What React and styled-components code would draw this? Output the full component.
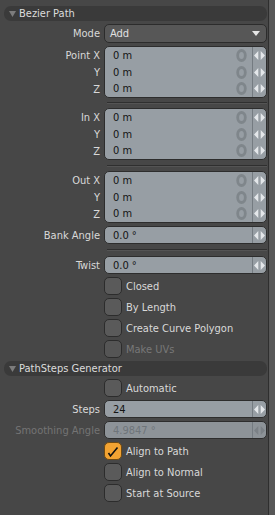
import React from 'react';
import styled, { createGlobalStyle } from 'styled-components';

const Global = createGlobalStyle`
  html, body { margin: 0; padding: 0; background: #474747; }
  body {
    font-family: "DejaVu Sans Condensed", "DejaVu Sans", sans-serif;
    font-stretch: condensed;
    font-size: 11px;
  }
`;

const Spinner = ({ dim }) => (
  <SpinCell>
    <svg width="11" height="11" viewBox="0 0 11 11">
      <path d="M0 5.5 L4.3 1 L4.3 10 Z M6.7 1 L11 5.5 L6.7 10 Z" fill={dim ? '#7b8186' : '#e4e7ea'} />
    </svg>
  </SpinCell>
);

const ZeroIcon = () => (
  <ZeroCell>
    <svg width="11" height="13" viewBox="0 0 11 13">
      <ellipse cx="5.5" cy="6.5" rx="3.8" ry="5" fill="none" stroke="#7f868b" strokeWidth="2.8" />
    </svg>
  </ZeroCell>
);

const VectorGroup = ({ labels }) => (
  <Line>
    <LabelStack>
      {labels.map((l, i) => (
        <StackLabel key={i}>{l}</StackLabel>
      ))}
    </LabelStack>
    <GroupBox>
      {labels.map((l, i) => (
        <GroupRow key={i}>
          <Value>0 m</Value>
          <ZeroIcon />
          <Spinner />
        </GroupRow>
      ))}
    </GroupBox>
  </Line>
);

const NumberRow = ({ label, value, disabled }) => (
  <Line>
    <Label disabled={disabled}>{label}</Label>
    <Field disabled={disabled}>
      <Value disabled={disabled}>{value}</Value>
      <Spinner dim={disabled} />
    </Field>
  </Line>
);

const Check = ({ label, checked, disabled }) => (
  <CheckLine>
    <Box checked={checked} disabled={disabled}>
      {checked && (
        <svg width="16" height="16" viewBox="0 0 16 16">
          <path d="M3.5 10 L5.5 13 L12.5 4.5" fill="none" stroke="#111" strokeWidth="1.6" />
        </svg>
      )}
    </Box>
    <CheckText disabled={disabled}>{label}</CheckText>
  </CheckLine>
);

const Header = ({ children }) => (
  <HeaderBar>
    <svg width="7" height="6" viewBox="0 0 7 6">
      <path d="M0 0 L7 0 L3.5 6 Z" fill="#7c7c7c" />
    </svg>
    <span>{children}</span>
  </HeaderBar>
);

const App = () => {
  return (
    <Root>
      <Global />
      <Panel>
        <Header>Bezier Path</Header>
        <Line>
          <Label>Mode</Label>
          <Dropdown>
            <span>Add</span>
            <svg width="8" height="5" viewBox="0 0 8 5">
              <path d="M0 0 L8 0 L4 5 Z" fill="#e6e6e6" />
            </svg>
          </Dropdown>
        </Line>
        <VectorGroup labels={['Point X', 'Y', 'Z']} />
        <Separator h={4} />
        <VectorGroup labels={['In X', 'Y', 'Z']} />
        <Separator h={5} />
        <VectorGroup labels={['Out X', 'Y', 'Z']} />
        <NumberRow label="Bank Angle" value="0.0 °" />
        <Separator h={6} />
        <NumberRow label="Twist" value="0.0 °" />
        <Check label="Closed" />
        <Check label="By Length" />
        <Check label="Create Curve Polygon" />
        <Check label="Make UVs" disabled />
        <Header>PathSteps Generator</Header>
        <Check label="Automatic" />
        <NumberRow label="Steps" value="24" />
        <NumberRow label="Smoothing Angle" value="4.9847 °" disabled />
        <Check label="Align to Path" checked />
        <Check label="Align to Normal" />
        <Check label="Start at Source" />
      </Panel>
      <Strip />
    </Root>
  );
};

const Root = styled.div`
  display: flex;
  width: 275px;
  height: 515px;
  background: #474747;
  overflow: hidden;
`;

const Panel = styled.div`
  width: 269px;
  border-right: 1px solid #2e2e2e;
  box-sizing: border-box;
  padding: 6px 1px 0 4px;
  display: flex;
  flex-direction: column;
  gap: 3px;
  color: #d9d9d9;
`;

const Strip = styled.div`
  flex: 1;
  background: #575757;
`;

const HeaderBar = styled.div`
  height: 15px;
  border-radius: 7px;
  background: #3a3a3a;
  display: flex;
  align-items: center;
  gap: 3px;
  padding-left: 5px;
  color: #dcdcdc;
`;

const Line = styled.div`
  display: flex;
  align-items: stretch;
`;

const Label = styled.div`
  width: 96px;
  flex: none;
  padding-right: 4px;
  display: flex;
  align-items: center;
  justify-content: flex-end;
  color: ${(p) => (p.disabled ? '#747474' : '#d9d9d9')};
  white-space: nowrap;
`;

const LabelStack = styled.div`
  width: 96px;
  flex: none;
  padding-right: 4px;
  padding-top: 1px;
  display: flex;
  flex-direction: column;
`;

const StackLabel = styled.div`
  height: 17px;
  line-height: 17px;
  text-align: right;
`;

const Dropdown = styled.div`
  flex: 1;
  height: 19px;
  box-sizing: border-box;
  border: 1px solid #2c2c2c;
  border-radius: 5px;
  background: #575757;
  display: flex;
  align-items: center;
  justify-content: space-between;
  padding: 0 6px 0 5px;
  color: #e2e2e2;
`;

const GroupBox = styled.div`
  flex: 1;
  border: 1px solid #2d2d2d;
  border-radius: 5px;
  background: #979ea4;
  display: flex;
  flex-direction: column;
  height: 52px;
  box-sizing: border-box;
  overflow: hidden;
`;

const GroupRow = styled.div`
  flex: 1;
  display: flex;
  align-items: stretch;
`;

const Field = styled.div`
  flex: 1;
  height: 18px;
  box-sizing: border-box;
  border: 1px solid #2d2d2d;
  border-radius: 5px;
  background: ${(p) => (p.disabled ? '#8d9398' : '#979ea4')};
  display: flex;
  overflow: hidden;
`;

const Value = styled.div`
  flex: 1;
  display: flex;
  align-items: center;
  padding-left: 8px;
  color: ${(p) => (p.disabled ? '#6f757a' : '#141414')};
`;

const ZeroCell = styled.div`
  width: 13px;
  display: flex;
  align-items: center;
  justify-content: center;
  margin-right: 4px;
`;

const SpinCell = styled.div`
  width: 13px;
  border-left: 1px solid #747b81;
  display: flex;
  align-items: center;
  justify-content: center;
`;

const Separator = styled.div`
  height: ${(p) => p.h}px;
  margin-left: 103px;
  display: flex;
  flex-direction: column;
  justify-content: center;
  &::before {
    content: '';
    height: 1px;
    background: #2f2f2f;
  }
  &::after {
    content: '';
    height: 1px;
    background: #545454;
  }
`;

const CheckLine = styled.div`
  display: flex;
  align-items: center;
  padding-left: 100px;
  height: 18px;
  gap: 4px;
`;

const Box = styled.div`
  width: 18px;
  height: 18px;
  box-sizing: border-box;
  border-radius: 5px;
  border: 1px solid ${(p) => (p.checked ? '#6e4a14' : '#2c2c2c')};
  background: ${(p) => (p.checked ? '#f2a332' : p.disabled ? '#555' : '#5a5a5a')};
  display: flex;
  align-items: center;
  justify-content: center;
`;

const CheckText = styled.span`
  color: ${(p) => (p.disabled ? '#787878' : '#d9d9d9')};
`;

export default App;
